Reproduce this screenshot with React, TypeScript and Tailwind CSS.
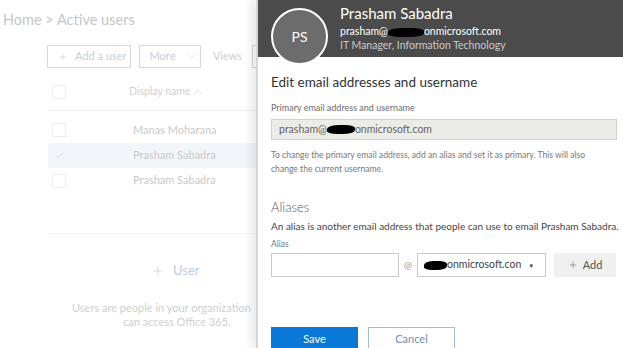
import { Check, ChevronDown, ChevronUp, Plus } from "lucide-react";

function Blob({ w }: { w: string }) {
  return <span className={`inline-block ${w} h-[9px] bg-black rounded-[40%] align-middle -skew-x-12`} />;
}

function UsersPage() {
  return (
    <div className="w-[256px] shrink-0 h-full bg-white text-[#c9c9c9] flex flex-col whitespace-nowrap">
      <div className="pl-[3px] pt-[9px] text-[14.5px] leading-[22px] text-[#c6c6c6]">Home &gt; Active users</div>
      <div className="pl-[47px] mt-[14px] flex items-center">
        <div className="h-[23px] w-[86px] border border-[#cfd9e6] flex items-center gap-[6px] pl-[9px] text-[11px] text-[#c6cfdb]">
          <Plus size={12} strokeWidth={1.2} />
          Add a user
        </div>
        <div className="ml-[8px] h-[23px] w-[64px] border border-[#cfd9e6] flex items-center gap-[10px] pl-[10px] text-[11px] text-[#c6cfdb]">
          More
          <ChevronDown size={13} strokeWidth={1.2} />
        </div>
        <div className="ml-[12px] text-[11px] text-[#cdcdcd]">Views</div>
        <div className="ml-[10px] h-[23px] w-[4px] border-l border-y border-[#cfd9e6]" />
      </div>
      <div className="ml-[48px] mt-[12px] h-[24px] flex items-center border-b border-[#eeeeee] pb-[6px] box-content">
        <div className="w-[14px] h-[14px] border border-[#eeeeee] ml-[4px]" />
        <div className="ml-[63px] text-[10.5px] text-[#d0d0d0] flex items-center">
          Display name
          <ChevronUp size={14} strokeWidth={1.2} />
        </div>
      </div>
      <div className="ml-[48px] mt-[6px] flex flex-col">
        <div className="h-[26px] flex items-center">
          <div className="w-[14px] h-[14px] border border-[#eeeeee] ml-[4px]" />
          <div className="ml-[67px] text-[11px] text-[#c9c9c9]">Manas Moharana</div>
        </div>
        <div className="h-[25px] flex items-center bg-[#f2f5fa]">
          <div className="w-[14px] h-[14px] ml-[4px] flex items-center justify-center text-[#c4c4c4]">
            <Check size={11} strokeWidth={1.3} />
          </div>
          <div className="ml-[67px] text-[11px] text-[#c9c9c9]">Prasham Sabadra</div>
        </div>
        <div className="h-[25px] flex items-center">
          <div className="w-[14px] h-[14px] border border-[#eeeeee] ml-[4px]" />
          <div className="ml-[67px] text-[11px] text-[#c9c9c9]">Prasham Sabadra</div>
        </div>
      </div>
      <div className="ml-[48px] mt-[40px] border-b border-[#f3f3f3]" />
      <div className="mt-[27px] pl-[151px] flex items-center gap-[8px] text-[13px] text-[#bccde4]">
        <Plus size={14} strokeWidth={1.2} />
        User
      </div>
      <div className="mt-[20px] text-[11px] leading-[14px] text-[#cfcfcf]">
        <div className="pl-[72px]">Users are people in your organization</div>
        <div className="pl-[123px]">can access Office 365.</div>
      </div>
    </div>
  );
}

function Panel() {
  return (
    <div className="flex-1 h-full bg-white border-l-2 border-[#d6d6d6] shadow-[-6px_0_8px_rgba(0,0,0,0.08)] overflow-hidden whitespace-nowrap">
      <div className="h-[57px] bg-[#4b4b4b] flex">
        <div className="ml-[13px] mt-[8px] w-[57px] h-[57px] shrink-0 rounded-full bg-[#6c6c6c] border-2 border-white flex items-center justify-center text-white text-[14px] z-10">
          PS
        </div>
        <div className="ml-[12px] pt-[3px] flex flex-col">
          <div className="text-white text-[15px] leading-[21px]">Prasham Sabadra</div>
          <div className="text-white text-[10.5px] leading-[14px]">
            prasham@<Blob w="w-[36px]" />onmicrosoft.com
          </div>
          <div className="text-[#c9c9c9] text-[10.5px] leading-[15px]">IT Manager, Information Technology</div>
        </div>
      </div>
      <div className="pl-[13px] pr-[6px]">
        <div className="mt-[15px] text-[13.5px] leading-[20px] text-[#333333]">Edit email addresses and username</div>
        <div className="mt-[9px] text-[9px] leading-[13px] text-[#6d6d6d]">Primary email address and username</div>
        <div className="mt-[5px] h-[21px] bg-[#ebebe7] border border-[#d0d0cc] flex items-center px-[7px] text-[10.5px] text-[#666666]">
          prasham@<Blob w="w-[28px]" />onmicrosoft.com
        </div>
        <div className="mt-[8px] text-[8.6px] leading-[14px] text-[#777777]">
          To change the primary email address, add an alias and set it as primary. This will also
          <br />
          change the current username.
        </div>
        <div className="mt-[21px] text-[13px] leading-[20px] text-[#555555] font-light">Aliases</div>
        <div className="mt-[2px] text-[10px] leading-[15px] text-[#444444]">
          An alias is another email address that people can use to email Prasham Sabadra.
        </div>
        <div className="mt-[4px] text-[8.5px] leading-[12px] text-[#777777]">Alias</div>
        <div className="mt-[3px] flex items-center">
          <div className="w-[128px] h-[24px] border border-[#c8c8c8] bg-white" />
          <div className="w-[18px] text-center text-[10px] text-[#999999]">@</div>
          <div className="w-[129px] h-[24px] border border-[#c8c8c8] bg-white flex items-center pl-[6px] text-[10.5px] text-[#444444]">
            <Blob w="w-[23px]" />
            onmicrosoft.con
            <span className="ml-[7px] text-[6px] text-[#444444]">▼</span>
          </div>
          <div className="ml-[8px] w-[62px] h-[24px] bg-[#f0f0f0] flex items-center justify-center gap-[5px] text-[11px] text-[#555555]">
            <Plus size={10} strokeWidth={1.2} />
            Add
          </div>
        </div>
        <div className="mt-[50px] flex gap-[10px]">
          <div className="w-[87px] h-[24px] bg-[#0a78d6] text-white text-[11px] flex items-center justify-center">Save</div>
          <div className="w-[87px] h-[24px] border border-[#9cc0e6] text-[#6f8fb5] text-[11px] flex items-center justify-center">
            Cancel
          </div>
        </div>
      </div>
    </div>
  );
}

export default function App() {
  return (
    <div className="w-[623px] h-[348px] overflow-hidden flex bg-white font-['Lato',sans-serif]">
      <UsersPage />
      <Panel />
    </div>
  );
}
